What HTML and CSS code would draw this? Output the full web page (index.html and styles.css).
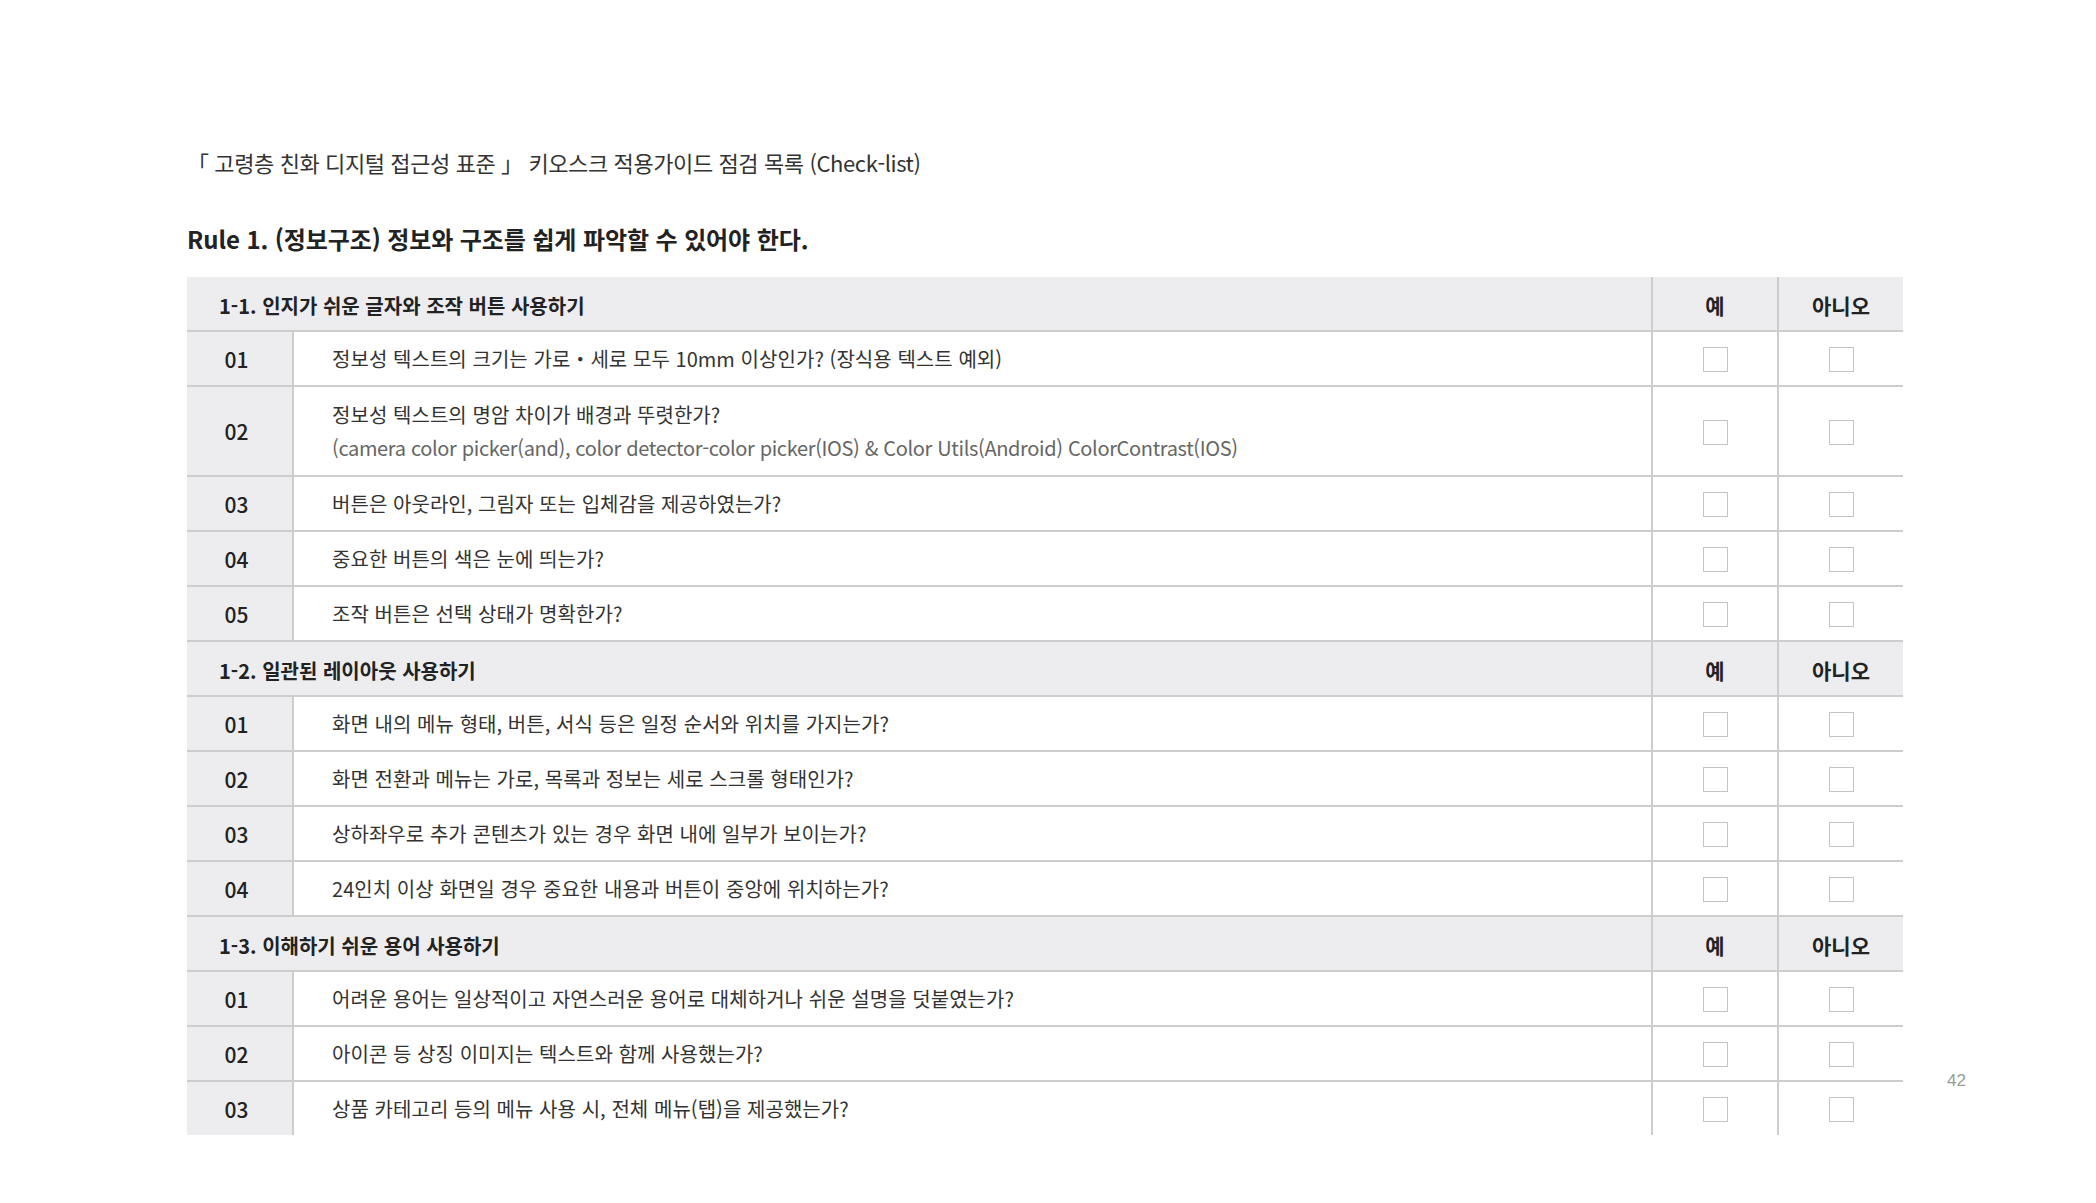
FILE: index.html
```html
<!DOCTYPE html>
<html lang="ko">
<head>
<meta charset="utf-8">
<title>Check-list</title>
<link rel="stylesheet" href="styles.css">
</head>
<body>
<div class="page">
  <p class="doc-title">「 고령층 친화 디지털 접근성 표준 」 키오스크 적용가이드 점검 목록 (Check-list)</p>
  <h1 class="rule-title">Rule 1. (정보구조) 정보와 구조를 쉽게 파악할 수 있어야 한다.</h1>
  <table class="checklist">
    <colgroup>
      <col class="c-num"><col class="c-text"><col class="c-yes"><col class="c-no">
    </colgroup>
    <tr class="sec">
      <th colspan="2" class="sec-title">1-1. 인지가 쉬운 글자와 조작 버튼 사용하기</th>
      <th class="opt">예</th><th class="opt">아니오</th>
    </tr>
    <tr>
      <td class="num">01</td>
      <td class="q">정보성 텍스트의 크기는 가로・세로 모두 10mm 이상인가? (장식용 텍스트 예외)</td>
      <td class="chk"><span class="box"></span></td><td class="chk"><span class="box"></span></td>
    </tr>
    <tr class="tall">
      <td class="num">02</td>
      <td class="q">정보성 텍스트의 명암 차이가 배경과 뚜렷한가?<span class="sub">(camera color picker(and), color detector-color picker(IOS) &amp; Color Utils(Android) ColorContrast(IOS)</span></td>
      <td class="chk"><span class="box"></span></td><td class="chk"><span class="box"></span></td>
    </tr>
    <tr>
      <td class="num">03</td>
      <td class="q">버튼은 아웃라인, 그림자 또는 입체감을 제공하였는가?</td>
      <td class="chk"><span class="box"></span></td><td class="chk"><span class="box"></span></td>
    </tr>
    <tr>
      <td class="num">04</td>
      <td class="q">중요한 버튼의 색은 눈에 띄는가?</td>
      <td class="chk"><span class="box"></span></td><td class="chk"><span class="box"></span></td>
    </tr>
    <tr>
      <td class="num">05</td>
      <td class="q">조작 버튼은 선택 상태가 명확한가?</td>
      <td class="chk"><span class="box"></span></td><td class="chk"><span class="box"></span></td>
    </tr>
    <tr class="sec">
      <th colspan="2" class="sec-title">1-2. 일관된 레이아웃 사용하기</th>
      <th class="opt">예</th><th class="opt">아니오</th>
    </tr>
    <tr>
      <td class="num">01</td>
      <td class="q">화면 내의 메뉴 형태, 버튼, 서식 등은 일정 순서와 위치를 가지는가?</td>
      <td class="chk"><span class="box"></span></td><td class="chk"><span class="box"></span></td>
    </tr>
    <tr>
      <td class="num">02</td>
      <td class="q">화면 전환과 메뉴는 가로, 목록과 정보는 세로 스크롤 형태인가?</td>
      <td class="chk"><span class="box"></span></td><td class="chk"><span class="box"></span></td>
    </tr>
    <tr>
      <td class="num">03</td>
      <td class="q">상하좌우로 추가 콘텐츠가 있는 경우 화면 내에 일부가 보이는가?</td>
      <td class="chk"><span class="box"></span></td><td class="chk"><span class="box"></span></td>
    </tr>
    <tr>
      <td class="num">04</td>
      <td class="q">24인치 이상 화면일 경우 중요한 내용과 버튼이 중앙에 위치하는가?</td>
      <td class="chk"><span class="box"></span></td><td class="chk"><span class="box"></span></td>
    </tr>
    <tr class="sec">
      <th colspan="2" class="sec-title">1-3. 이해하기 쉬운 용어 사용하기</th>
      <th class="opt">예</th><th class="opt">아니오</th>
    </tr>
    <tr>
      <td class="num">01</td>
      <td class="q">어려운 용어는 일상적이고 자연스러운 용어로 대체하거나 쉬운 설명을 덧붙였는가?</td>
      <td class="chk"><span class="box"></span></td><td class="chk"><span class="box"></span></td>
    </tr>
    <tr>
      <td class="num">02</td>
      <td class="q">아이콘 등 상징 이미지는 텍스트와 함께 사용했는가?</td>
      <td class="chk"><span class="box"></span></td><td class="chk"><span class="box"></span></td>
    </tr>
    <tr class="last">
      <td class="num">03</td>
      <td class="q">상품 카테고리 등의 메뉴 사용 시, 전체 메뉴(탭)을 제공했는가?</td>
      <td class="chk"><span class="box"></span></td><td class="chk"><span class="box"></span></td>
    </tr>
  </table>
  <span class="page-num">42</span>
</div>
</body>
</html>
```

FILE: styles.css
```css
html, body {
  margin: 0;
  padding: 0;
  background: #ffffff;
}

body {
  font-family: "Noto Sans CJK KR", "Noto Sans", sans-serif;
  color: #333333;
}

.page {
  position: relative;
  width: 2096px;
  height: 1203px;
  box-sizing: border-box;
  padding: 147px 193px 0 187px;
  overflow: hidden;
}

.doc-title {
  margin: 0;
  font-size: 22px;
  line-height: 30px;
  letter-spacing: -0.4px;
  font-weight: 400;
  color: #333333;
}

.rule-title {
  margin: 45px 0 0 0;
  font-size: 24px;
  line-height: 34px;
  letter-spacing: -0.1px;
  font-weight: 700;
  color: #222222;
}

.checklist {
  margin-top: 21px;
  width: 1716px;
  border-collapse: collapse;
  table-layout: fixed;
}

.c-num { width: 106px; }
.c-text { width: 1359px; }
.c-yes { width: 126px; }
.c-no { width: 125px; }

.checklist th,
.checklist td {
  padding: 0;
  height: 53px;
  border-bottom: 2px solid #cdcdcd;
  vertical-align: middle;
}

.checklist tr.last td {
  border-bottom: none;
}

.sec th {
  background: #ededf0;
  font-weight: 700;
  color: #222222;
  padding-top: 3px;
  height: 50px;
}

.sec-title {
  text-align: left;
  padding-left: 32px !important;
  font-size: 20px;
  letter-spacing: 0;
}

.opt {
  text-align: center;
  font-size: 21px;
  border-left: 2px solid #cdcdcd;
}

.num {
  background: #ededf0;
  text-align: center;
  font-size: 21px;
  font-weight: 500;
  color: #222222;
  padding-right: 6px !important;
  border-right: 2px solid #cdcdcd;
}

.q {
  padding-left: 38px !important;
  font-size: 20px;
  letter-spacing: 0.05px;
  line-height: 33px;
  color: #333333;
}

.tall td {
  height: 88px;
}

.sub {
  display: block;
  color: #666666;
  letter-spacing: -0.35px;
}

.chk {
  text-align: center;
  border-left: 2px solid #cdcdcd;
}

.box {
  display: inline-block;
  width: 23px;
  height: 23px;
  border: 1px solid #c4c4c4;
  vertical-align: middle;
}

.page-num {
  position: absolute;
  left: 1947px;
  top: 1071px;
  font-family: "Liberation Sans", Arial, sans-serif;
  font-size: 17px;
  color: #9a9a9a;
}
```
